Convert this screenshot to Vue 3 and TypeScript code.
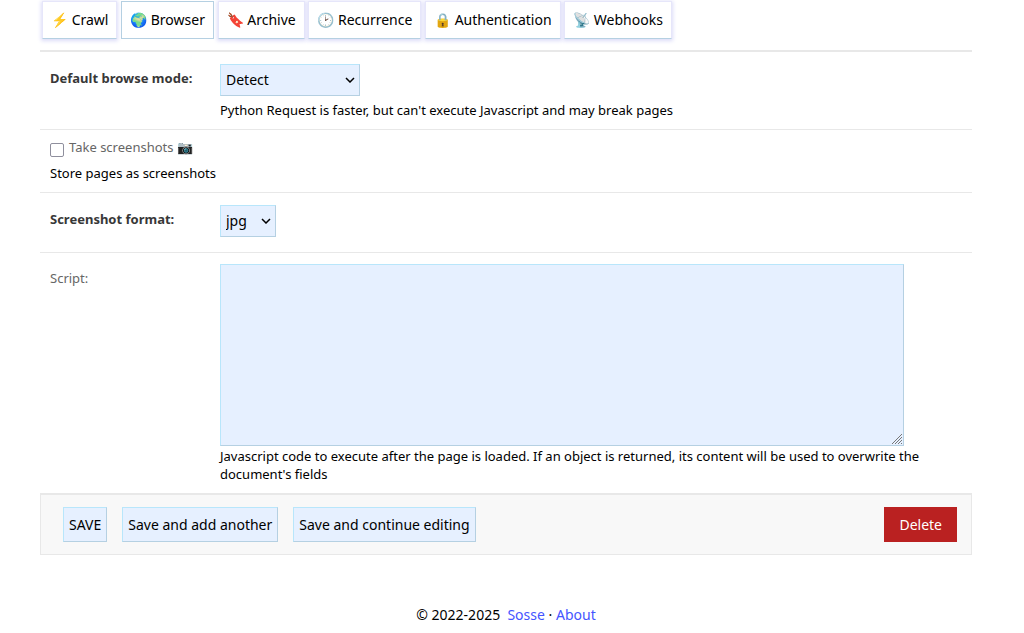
<script setup lang="ts">
import { ref } from 'vue'

interface Tab { icon: string; label: string }
const tabs: Tab[] = [
  { icon: '⚡', label: 'Crawl' },
  { icon: '🌍', label: 'Browser' },
  { icon: '🔖', label: 'Archive' },
  { icon: '🕑', label: 'Recurrence' },
  { icon: '🔒', label: 'Authentication' },
  { icon: '📡', label: 'Webhooks' },
]
const active = ref('Browser')
const mode = ref('Detect')
const format = ref('jpg')
const screenshots = ref(false)
const code = ref('')
</script>

<template>
  <main class="page">
    <nav class="tabs">
      <template v-for="t in tabs" :key="t.label"><button type="button" class="tab" :class="{ active: t.label === active }" @click="active = t.label">{{ t.icon }} {{ t.label }}</button>{{ ' ' }}</template>
    </nav>
    <form @submit.prevent>
      <div class="row">
        <label class="label strong" for="mode">Default browse mode:</label>
        <div class="field">
          <select id="mode" v-model="mode" class="wide">
            <option>Detect</option>
            <option>Chromium</option>
            <option>Firefox</option>
            <option>Python Requests</option>
          </select>
          <p class="help">Python Request is faster, but can't execute Javascript and may break pages</p>
        </div>
      </div>
      <div class="row check">
        <div class="field">
          <div class="tick"><input id="shots" v-model="screenshots" type="checkbox"><label for="shots">Take screenshots 📷</label></div>
          <p class="help">Store pages as screenshots</p>
        </div>
      </div>
      <div class="row format">
        <label class="label strong" for="format">Screenshot format:</label>
        <div class="field">
          <select id="format" v-model="format" class="narrow">
            <option>jpg</option>
            <option>png</option>
          </select>
        </div>
      </div>
      <div class="row script">
        <label class="label" for="script">Script:</label>
        <div class="field">
          <textarea id="script" v-model="code"></textarea>
          <p class="help">Javascript code to execute after the page is loaded. If an object is returned, its content will be used to overwrite the document's fields</p>
        </div>
      </div>
      <div class="submit">
        <button type="submit">SAVE</button>
        <button type="submit">Save and add another</button>
        <button type="submit">Save and continue editing</button>
        <button type="button" class="delete">Delete</button>
      </div>
    </form>
    <footer>© 2022-2025 &nbsp;<a href="#sosse">Sosse</a> · <a href="#about">About</a></footer>
  </main>
</template>

<style>
body {
  background: #fff;
}
</style>

<style scoped>
.page {
  padding: 1px 52px 0 40px;
  font: 14px/19px "Noto Sans", sans-serif;
  color: #000;
}
button,
select,
textarea {
  box-sizing: border-box;
  margin: 0;
  font: inherit;
  color: #000;
  border: 1px solid;
  border-color: #b8e6fb #b5d0e2 #b5d0e2 #b8e6fb;
  border-radius: 0;
  background-color: #e6f0ff;
}
.tabs {
  padding: 0 2px 11px;
  border-bottom: 2px solid #e8e8e8;
}
.tab {
  height: 38px;
  padding: 0 8px 2px;
  vertical-align: top;
  border-color: #e6e6fa #e6e6fa #b5d0e2;
  background: #fff;
  box-shadow: 0 1px 4px 1px #dcdcf8;
}
.tab.active {
  border-color: #b5d0e2;
  box-shadow: none;
}
.row {
  display: flex;
  padding: 12px 10px 10px;
  border-bottom: 1px solid #e8e8e8;
  font-size: 13px;
  line-height: 18px;
}
.label {
  flex: 0 0 170px;
  color: #666;
}
.strong {
  padding-top: 5px;
  font-weight: 700;
  color: #383838;
}
.field {
  flex: 1;
  min-width: 0;
}
select {
  display: block;
  height: 32px;
  padding: 0 20px 0 5px;
  appearance: none;
  font-size: 14px;
  background-image: url("data:image/svg+xml,%3Csvg xmlns='http://www.w3.org/2000/svg' width='10' height='6'%3E%3Cpath d='M1 1l4 4 4-4' fill='none' stroke='%23000' stroke-width='1.5'/%3E%3C/svg%3E");
  background-repeat: no-repeat;
  background-position: right 4px center;
}
.wide {
  width: 140px;
}
.narrow {
  width: 56px;
}
.help {
  margin: 5px 0 0;
}
.check {
  padding-top: 8px;
}
.check .help {
  margin-top: 7px;
}
.tick {
  display: flex;
  color: #666;
}
.tick input {
  box-sizing: border-box;
  margin: 5px 5px 0 0;
  width: 14px;
  height: 14px;
  appearance: none;
  border: 1px solid #8f8f9d;
  border-radius: 2px;
  background: #fff;
}
.tick input:checked {
  border-color: #0060df;
  background: #0060df;
}
.tick label {
  height: 18px;
}
.format {
  padding-bottom: 15px;
}
.script {
  padding-top: 11px;
}
.script .label {
  padding-top: 5px;
}
textarea {
  display: block;
  width: 75%;
  min-width: 684px;
  height: 182px;
}
textarea::-webkit-resizer {
  background: url("data:image/svg+xml,%3Csvg xmlns='http://www.w3.org/2000/svg' width='12' height='12'%3E%3Cpath d='M1 11L11 1M4 11l7-7M7 11l4-4M10 11l1-1' fill='none' stroke='%23777' stroke-width='1'/%3E%3C/svg%3E") right bottom no-repeat;
}
.script .help {
  margin-top: 1px;
}
.submit {
  display: flex;
  gap: 15px;
  padding: 12px 14px 12px 22px;
  border: 1px solid #e8e8e8;
  background: #f8f8f8;
}
.submit button {
  height: 35px;
  padding: 0 5px;
}
.submit .delete {
  margin-left: auto;
  padding: 0 15px;
  border: 0;
  background: #ba2121;
  color: #fff;
}
footer {
  padding: 50px 0 9px;
  text-align: center;
}
a {
  color: #4455ff;
  text-decoration: none;
}
</style>
